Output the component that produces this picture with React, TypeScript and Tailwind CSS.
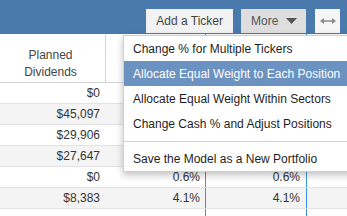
import React from 'react';

// values under the open menu are not visible, so they are left blank
const rows = [
  { div: '$0', pct: '', model: '' },
  { div: '$45,097', pct: '', model: '' },
  { div: '$29,906', pct: '', model: '' },
  { div: '$27,647', pct: '', model: '' },
  { div: '$0', pct: '0.6%', model: '0.6%' },
  { div: '$8,383', pct: '4.1%', model: '4.1%' },
  { div: '', pct: '', model: '' },
];

const menuItems = [
  'Change % for Multiple Tickers',
  'Allocate Equal Weight to Each Position',
  'Allocate Equal Weight Within Sectors',
  'Change Cash % and Adjust Positions',
];

export default function App() {
  return (
    <div className="relative w-[347px] h-[216px] overflow-hidden bg-white text-[12px] text-[#333] font-['Liberation_Sans',Arial,sans-serif]">
      {/* Top toolbar */}
      <div className="h-[34px] bg-[#4a7aab] flex justify-end items-start pt-[9px] pr-[7px]">
        <button className="h-[24px] px-[10px] bg-[#f2f2f2] text-[#444] leading-[24px]">Add a Ticker</button>
        <button className="ml-[8px] h-[24px] w-[65px] pl-[10px] bg-[#dedede] text-[#555] flex items-center leading-[24px]">
          More
          <svg width="11" height="6" viewBox="0 0 11 6" className="ml-[8px]">
            <path d="M0 0 H11 L5.5 6 Z" fill="#555" />
          </svg>
        </button>
        <button className="ml-[9px] h-[24px] w-[25px] bg-[#f5f5f5] flex items-center justify-center">
          <svg width="16" height="8" viewBox="0 0 16 8">
            <path d="M3 4 H13" stroke="#8a8a8a" strokeWidth="1.5" />
            <path d="M0 4 L4 1 V7 Z M16 4 L12 1 V7 Z" fill="#8a8a8a" />
          </svg>
        </button>
      </div>

      {/* Table header */}
      <div className="flex h-[49px] border-b border-[#d4d4d4]">
        <div className="w-[106px] border-r border-[#d4d4d4] flex flex-col justify-end items-center pb-[1px] pr-[4px] leading-[17px] text-[#444]">
          <span>Planned</span>
          <span>Dividends</span>
        </div>
        <div className="w-[99px]" />
        <div className="w-[102px] border-x border-[#3f8ee6]" />
      </div>

      {/* Table body */}
      {rows.map((r, i) => (
        <div
          key={i}
          className={`flex h-[21px] border-b border-[#e2e2e2] leading-[20px] ${i % 2 === 1 ? 'bg-[#f4f4f4]' : 'bg-white'}`}
        >
          <div className="w-[106px] text-right pr-[6px]">{r.div}</div>
          <div className="w-[99px] text-right pr-[5px]">{r.pct}</div>
          <div className="w-[102px] border-x border-[#3f8ee6] text-right pr-[6px]">{r.model}</div>
          <div className="flex-1" />
        </div>
      ))}

      {/* Dropdown menu */}
      <div className="absolute left-[123px] top-[35px] w-[240px] bg-white border border-[#cfcfcf] shadow-[0_3px_7px_rgba(0,0,0,0.25)] text-[#1e1e1e]">
        {menuItems.map((m, i) => (
          <div
            key={m}
            className={`h-[25px] pl-[9px] flex items-center ${i === 1 ? 'bg-[#6b92c0] text-white' : ''}`}
          >
            {m}
          </div>
        ))}
        <div className="mt-[5px] mb-[5px] border-t border-[#d0d0d0]" />
        <div className="h-[24px] pl-[9px] flex items-center">Save the Model as a New Portfolio</div>
      </div>
    </div>
  );
}
